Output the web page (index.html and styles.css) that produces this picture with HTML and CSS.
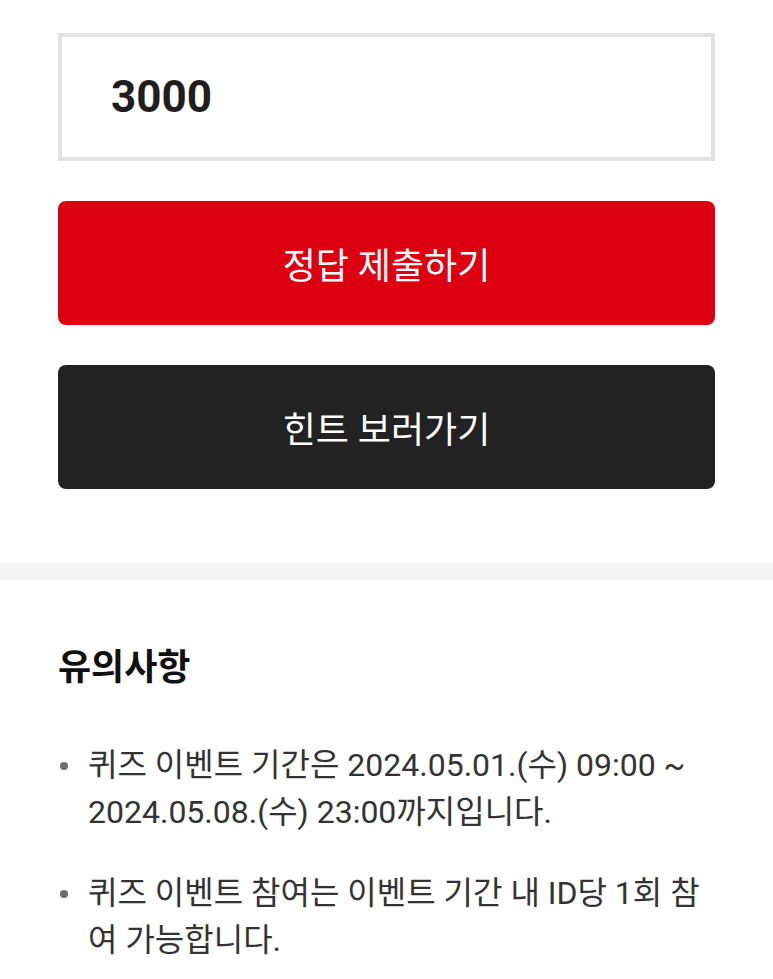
FILE: index.html
```html
<!DOCTYPE html>
<html lang="ko">
<head>
    <meta charset="UTF-8">
    <meta name="viewport" content="width=device-width, initial-scale=1.0">
    <title>퀴즈 이벤트</title>
    <link rel="stylesheet" href="styles.css">
</head>
<body>
    <div class="quiz">
        <div class="answer-box">
            <input type="text" class="answer-input" value="3000">
        </div>
        <button class="btn submit">정답 제출하기</button>
        <button class="btn hint">힌트 보러가기</button>
    </div>

    <div class="divider"></div>

    <div class="notice">
        <h2>유의사항</h2>
        <ul class="notice-list">
            <li>퀴즈 이벤트 기간은 2024.05.01.(수) 09:00 ~ 2024.05.08.(수) 23:00까지입니다.</li>
            <li>퀴즈 이벤트 참여는 이벤트 기간 내 ID당 1회 참여 가능합니다.</li>
        </ul>
    </div>
</body>
</html>
```

FILE: styles.css
```css
body {
    font-family: Roboto, "Noto Sans CJK KR", sans-serif;
    margin: 0;
    padding: 0;
    background-color: #fff;
    color: #222;
}
.quiz {
    padding: 33px 58px 73px;
    display: flex;
    flex-direction: column;
    gap: 40px;
}
.answer-box {
    height: 120px;
    border: 4px solid #e2e2e2;
    display: flex;
    align-items: center;
    padding: 0 49px;
}
.answer-input {
    border: none;
    outline: none;
    padding: 0;
    width: 100%;
    font-family: Roboto, sans-serif;
    font-size: 44px;
    font-weight: 700;
    color: #1e1e1e;
    background: transparent;
}
.btn {
    height: 124px;
    border: none;
    border-radius: 8px;
    color: #fff;
    font-family: Roboto, "Noto Sans CJK KR", sans-serif;
    font-size: 36px;
    cursor: pointer;
}
.btn.submit {
    background-color: #dc0011;
}
.btn.hint {
    background-color: #222;
}
.divider {
    height: 19px;
    background-color: #f5f5f5;
}
.notice {
    padding: 63px 58px 0;
}
.notice h2 {
    margin: 0 0 50px;
    font-size: 36px;
    line-height: 48px;
    font-weight: 700;
    color: #111;
}
.notice-list {
    margin: 0;
    padding: 0;
    list-style: none;
}
.notice-list li {
    position: relative;
    padding-left: 30px;
    font-size: 32px;
    line-height: 47px;
    color: #333;
    margin-bottom: 34px;
}
.notice-list li:last-child {
    margin-bottom: 0;
}
.notice-list li::before {
    content: "";
    position: absolute;
    left: 2px;
    top: 20px;
    width: 8px;
    height: 8px;
    border-radius: 50%;
    background-color: #6e6e6e;
}
```
